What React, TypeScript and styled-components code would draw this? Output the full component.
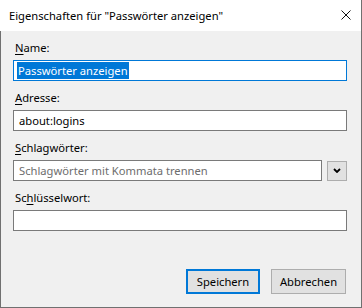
import React from "react";
import styled, { createGlobalStyle } from "styled-components";

const Global = createGlobalStyle`
  html, body { margin: 0; padding: 0; background: #ffffff; }
  body { font-family: "Segoe UI", "Noto Sans", "Open Sans", sans-serif; font-size: 11px; color: #000; }
`;

const Window = styled.div`
  width: 362px;
  height: 308px;
  box-sizing: border-box;
  display: flex;
  flex-direction: column;
  border-right: 1px solid #707070;
  border-bottom: 1px solid #707070;
  background: #f0f0f0;
`;

const TitleBar = styled.div`
  height: 31px;
  flex: none;
  background: #ffffff;
  display: flex;
  align-items: center;
  justify-content: space-between;
  padding: 0 10px 0 9px;
  box-sizing: border-box;
  font-size: 11.2px;
  line-height: 16px;
`;

const CloseButton = styled.div`
  width: 10px;
  height: 10px;
  display: flex;
  margin-top: -1px;
`;

const Body = styled.div`
  flex: 1;
  border-left: 1px solid #707070;
  padding: 9px 14px 0 12px;
  display: flex;
  flex-direction: column;
`;

const Field = styled.div`
  display: flex;
  flex-direction: column;
  margin-bottom: 9px;
`;

const Label = styled.div`
  height: 16px;
  line-height: 16px;
  margin: 0 0 4px 2px;
  font-size: 11.2px;
`;

const Key = styled.span`
  text-decoration: underline;
  text-underline-offset: 2px;
`;

const Row = styled.div`
  display: flex;
  align-items: center;
  gap: 5px;
`;

const TextBox = styled.div<{ $focused?: boolean }>`
  flex: 1 1 auto;
  min-width: 0;
  height: 21px;
  box-sizing: border-box;
  background: #ffffff;
  border: 1px solid ${(p) => (p.$focused ? "#0078d7" : "#7a7a7a")};
  padding: 0 4px 0 5px;
  display: flex;
  align-items: center;
  font-size: 11.2px;
  white-space: nowrap;
  overflow: hidden;
`;

const Selected = styled.span`
  background: #0078d7;
  color: #ffffff;
  line-height: 17px;
  padding: 0 1px;
  margin-left: -2px;
`;

const Placeholder = styled.span`
  color: #6d6d6d;
`;

const DropButton = styled.div`
  width: 20px;
  height: 20px;
  box-sizing: border-box;
  background: #e1e1e1;
  border: 1px solid #adadad;
  display: flex;
  align-items: center;
  justify-content: center;
  flex: none;
`;

const ButtonRow = styled.div`
  margin-top: 29px;
  display: flex;
  justify-content: flex-end;
  gap: 11px;
  padding-right: 1px;
`;

const Button = styled.div<{ $default?: boolean }>`
  width: ${(p) => (p.$default ? 74 : 75)}px;
  height: 25px;
  box-sizing: border-box;
  background: #e1e1e1;
  border: ${(p) => (p.$default ? "2px solid #0078d7" : "1px solid #adadad")};
  display: flex;
  align-items: center;
  justify-content: center;
  font-size: 11.2px;
`;

export default function App() {
  return (
    <>
      <Global />
      <Window>
        <TitleBar>
          <span>Eigenschaften für "Passwörter anzeigen"</span>
          <CloseButton>
            <svg width="10" height="10" viewBox="0 0 10 10">
              <path d="M0.5 0.5 L9.5 9.5 M9.5 0.5 L0.5 9.5" stroke="#111" strokeWidth="1" fill="none" />
            </svg>
          </CloseButton>
        </TitleBar>
        <Body>
          <Field>
            <Label><Key>N</Key>ame:</Label>
            <TextBox $focused><Selected>Passwörter anzeigen</Selected></TextBox>
          </Field>
          <Field>
            <Label><Key>A</Key>dresse:</Label>
            <TextBox>about:logins</TextBox>
          </Field>
          <Field>
            <Label><Key>S</Key>chlagwörter:</Label>
            <Row>
              <TextBox><Placeholder>Schlagwörter mit Kommata trennen</Placeholder></TextBox>
              <DropButton>
                <svg width="8" height="5" viewBox="0 0 8 5">
                  <path d="M1 1 L4 4 L7 1" stroke="#000" strokeWidth="1.8" fill="none" />
                </svg>
              </DropButton>
            </Row>
          </Field>
          <Field>
            <Label>Sc<Key>h</Key>lüsselwort:</Label>
            <TextBox />
          </Field>
          <ButtonRow>
            <Button $default>Speichern</Button>
            <Button>Abbrechen</Button>
          </ButtonRow>
        </Body>
      </Window>
    </>
  );
}
